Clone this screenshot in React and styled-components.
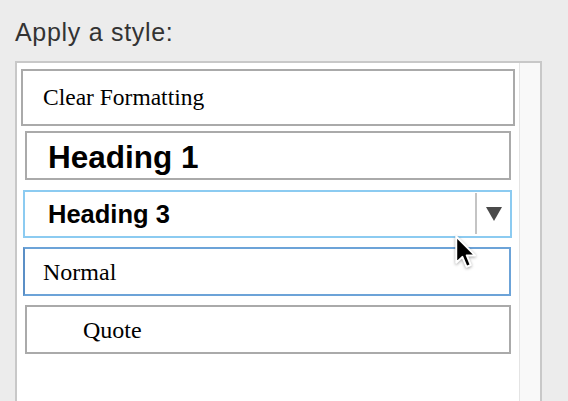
import React from "react";
import styled, { createGlobalStyle } from "styled-components";

const Global = createGlobalStyle`
  html, body { margin: 0; padding: 0; background: #ececec; }
  body { width: 568px; height: 401px; overflow: hidden; }
`;

const Page = styled.div`
  position: relative;
  width: 568px;
  height: 401px;
  padding: 17px 0 0 15px;
  box-sizing: border-box;
  display: flex;
  flex-direction: column;
`;

const Label = styled.div`
  font-family: "Liberation Sans", Arial, sans-serif;
  font-size: 25px;
  letter-spacing: 0.7px;
  color: #333;
  line-height: 30px;
  margin-left: 0;
  height: 46px;
`;

const Panel = styled.div`
  width: 527px;
  height: 360px;
  box-sizing: border-box;
  border: 2px solid #c8c8c8;
  border-bottom: none;
  background: #fff;
  display: flex;
`;

const List = styled.div`
  flex: 1;
  display: flex;
  flex-direction: column;
  padding-top: 3px;
`;

const Scrollbar = styled.div`
  width: 20px;
  border-left: 1px solid #e4e4e4;
  background: #f9f9f9;
`;

const Item = styled.div`
  box-sizing: border-box;
  height: ${(p) => p.$h}px;
  margin: ${(p) => p.$mt}px ${(p) => p.$mr}px 0 ${(p) => p.$ml}px;
  border: 2px solid ${(p) => p.$border || "#aaa"};
  ${(p) => (p.$leftBorder ? `border-left-color: ${p.$leftBorder};` : "")}
  padding-left: ${(p) => p.$pl}px;
  display: flex;
  align-items: center;
  position: relative;
  color: #000;
  font-family: ${(p) =>
    p.$sans
      ? `"Liberation Sans", Arial, sans-serif`
      : `"Liberation Serif", "Times New Roman", serif`};
  font-size: ${(p) => p.$size}px;
  font-weight: ${(p) => (p.$bold ? 700 : 400)};
`;

const ItemText = styled.span`
  flex: 1;
  transform: translateY(${(p) => p.$dy || 0}px);
`;

const DropButton = styled.div`
  width: 32px;
  height: 41px;
  margin-right: 1px;
  border-left: 2px solid #c4c4c4;
  display: flex;
  align-items: center;
  justify-content: center;
`;

const Triangle = styled.div`
  width: 0;
  height: 0;
  border-left: 8px solid transparent;
  border-right: 8px solid transparent;
  border-top: 14px solid #4a4a4a;
  margin-left: 2px;
`;

const Cursor = styled.svg`
  position: absolute;
  left: 454px;
  top: 235px;
  filter: drop-shadow(0 1px 1.5px rgba(0, 0, 0, 0.35));
`;

export default function App() {
  return (
    <>
      <Global />
      <Page>
        <Label>Apply a style:</Label>
        <Panel>
          <List>
            <Item $h={57} $mt={3} $ml={4} $mr={4} $pl={20} $size={23.5}>
              <ItemText $dy={0}>Clear Formatting</ItemText>
            </Item>
            <Item $h={49} $mt={5} $ml={8} $mr={8} $pl={21} $size={31.5} $sans $bold>
              <ItemText $dy={2}>Heading 1</ItemText>
            </Item>
            <Item
              $h={48}
              $mt={10}
              $ml={6}
              $mr={7}
              $pl={23}
              $size={25.5}
              $sans
              $bold
              $border="#8ccbf1"
            >
              <ItemText $dy={1}>Heading 3</ItemText>
              <DropButton>
                <Triangle />
              </DropButton>
            </Item>
            <Item
              $h={49}
              $mt={9}
              $ml={6}
              $mr={8}
              $pl={18}
              $size={24}
              $border="#6ca3d8"
              $leftBorder="#5b8fc6"
            >
              <ItemText $dy={1}>Normal</ItemText>
            </Item>
            <Item $h={49} $mt={9} $ml={8} $mr={8} $pl={56} $size={24}>
              <ItemText $dy={1}>Quote</ItemText>
            </Item>
          </List>
          <Scrollbar />
        </Panel>
        <Cursor width="24" height="36" viewBox="0 0 16 24">
          <path
            d="M1.5 1 L1.5 18.5 L5.6 14.6 L8.4 21.2 L11.2 20 L8.5 13.6 L14 13.6 Z"
            fill="#000"
            stroke="#fff"
            strokeWidth="1.3"
            strokeLinejoin="round"
          />
        </Cursor>
      </Page>
    </>
  );
}
